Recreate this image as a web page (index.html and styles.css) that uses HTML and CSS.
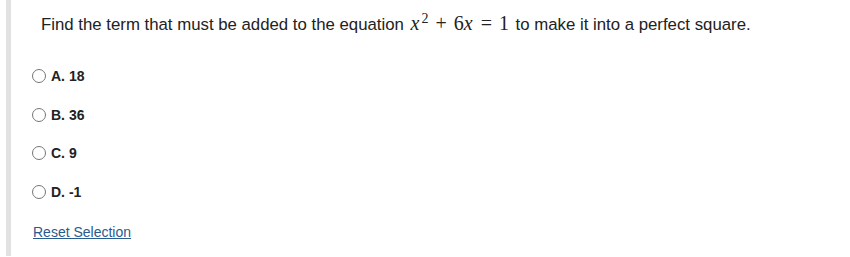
FILE: index.html
```html
<!DOCTYPE html>
<html lang="en">
<head>
    <meta charset="UTF-8">
    <title>Question</title>
    <link rel="stylesheet" href="styles.css">
</head>
<body>
    <div class="question-box">
        <p class="question">Find the term that must be added to the equation <span class="math"><i>x</i><sup>2</sup><span class="op">+</span>6<i>x</i><span class="op">=</span>1</span> to make it into a perfect square.</p>
        <div class="choices">
            <label class="choice"><input type="radio" name="answer"> A. 18</label>
            <label class="choice"><input type="radio" name="answer"> B. 36</label>
            <label class="choice"><input type="radio" name="answer"> C. 9</label>
            <label class="choice"><input type="radio" name="answer"> D. -1</label>
        </div>
        <a href="#" class="reset">Reset Selection</a>
    </div>
</body>
</html>
```

FILE: styles.css
```css
body {
    margin: 0;
    background: #ffffff;
    font-family: "Liberation Sans", Arial, sans-serif;
    color: #222222;
}

.question-box {
    margin-left: 6px;
    border-left: 5px solid #e2e2e2;
    height: 256px;
    box-sizing: border-box;
    padding: 12px 0 0 22px;
}

.question {
    margin: 0 0 0 8px;
    font-size: 16.8px;
    line-height: 22px;
}

.math {
    font-family: "Liberation Serif", "DejaVu Serif", serif;
    font-size: 20px;
    margin: 0 2px 0 2px;
}

.math i {
    font-style: italic;
    padding-right: 1px;
}

.math sup {
    font-size: 14px;
    line-height: 0;
    vertical-align: 7px;
    margin-left: 1px;
}

.math .op {
    margin: 0 7px;
}

.choices {
    display: flex;
    flex-direction: column;
    gap: 19.6px;
    margin-top: 30px;
}

.choice {
    display: flex;
    align-items: center;
    height: 19.3px;
    font-size: 14px;
    font-weight: bold;
    color: #222222;
}

.choice input {
    margin: 0 5px 0 -1px;
    width: 14px;
    height: 14px;
}

.reset {
    display: inline-block;
    margin-top: 22px;
    font-size: 14px;
    color: #2a5b8f;
}
```
